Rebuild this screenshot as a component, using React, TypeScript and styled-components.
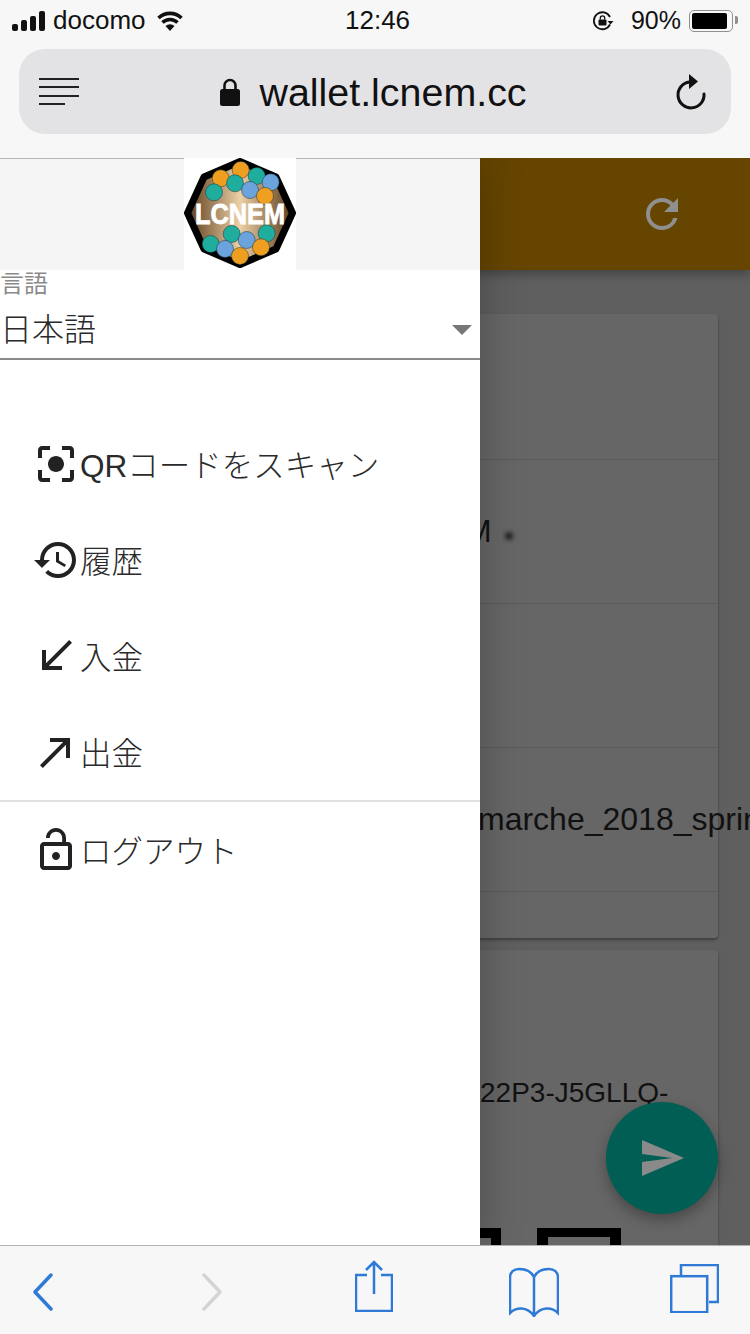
import styled, { createGlobalStyle } from 'styled-components'
import { MdCallMade, MdCallReceived, MdCenterFocusStrong, MdHistory, MdLockOpen, MdRefresh, MdSend } from 'react-icons/md'
import type { ReactNode } from 'react'

const UI_FONT = '"Liberation Sans", "Noto Sans CJK JP", sans-serif'
const BLUE = '#2f7ad6'

const UPPER_CELLS = [
	[36.7, 20.3, '#ef9f1f'],
	[56.7, 12, '#ef9f1f'],
	[72.7, 18, '#1fae9e'],
	[86.7, 24.3, '#6ba3dc'],
	[51, 25.3, '#1fae9e'],
	[30, 34.3, '#1fae9e'],
	[66, 32, '#6ba3dc'],
	[81, 38, '#ef9f1f'],
] as const

const LOWER_CELLS = [
	[47.7, 76, '#1fae9e'],
	[82.7, 75.3, '#1fae9e'],
	[62.7, 82, '#6ba3dc'],
	[26.7, 86, '#1fae9e'],
	[41, 91, '#6ba3dc'],
	[77, 89.3, '#ef9f1f'],
	[56, 98, '#ef9f1f'],
] as const

const MENU: { icon: ReactNode; label: string }[] = [
	{ icon: <MdCenterFocusStrong size={48} />, label: 'QRコードをスキャン' },
	{ icon: <MdHistory size={48} />, label: '履歴' },
	{ icon: <MdCallReceived size={48} />, label: '入金' },
	{ icon: <MdCallMade size={48} />, label: '出金' },
]

function Logo() {
	return (
		<svg width="112" height="112" viewBox="0 0 112 112">
			<defs>
				<linearGradient id="coin" x1="0" x2="1" y1="0" y2="0">
					<stop offset="0" stopColor="#5c3d1c" />
					<stop offset="0.5" stopColor="#ecd0a6" />
					<stop offset="1" stopColor="#5c3d1c" />
				</linearGradient>
			</defs>
			<rect width="112" height="112" fill="#fff" />
			<polygon
				points="56,3.500 92,19 108.500,55 92,91 56,106.500 20,91 3.500,55 20,19"
				fill="url(#coin)"
				stroke="#000"
				strokeWidth="7"
				strokeLinejoin="round"
			/>
			{[...UPPER_CELLS, ...LOWER_CELLS].map(([cx, cy, fill]) => (
				<circle key={`${cx}-${cy}`} cx={cx} cy={cy} r="8.500" fill={fill} stroke="#17323a" strokeWidth="0.5" />
			))}
			<text
				x="11"
				y="66"
				fill="#fff"
				stroke="#fff"
				strokeWidth="0.8"
				fontFamily="Liberation Sans"
				fontWeight="700"
				fontSize="29"
				textLength="90"
				lengthAdjust="spacingAndGlyphs"
			>
				LCNEM
			</text>
		</svg>
	)
}

export default function App() {
	return (
		<Phone>
			<GlobalStyle />
			<TopChrome>
				<StatusBar>
					<StatusSide>
						<svg width="33" height="20" viewBox="0 0 33 20">
							<rect x="0" y="13" width="6" height="7" rx="2" fill="#111" />
							<rect x="9" y="9" width="6" height="11" rx="2" fill="#111" />
							<rect x="18" y="5" width="6" height="15" rx="2" fill="#111" />
							<rect x="27" y="0" width="6" height="20" rx="2" fill="#111" />
						</svg>
						<Carrier>docomo</Carrier>
						<svg width="28" height="20" viewBox="0 0 28 20">
							<path d="M14 20 9.500 15a6.500 6.500 0 0 1 9 0Z" fill="#111" />
							<path d="M6.500 11.500a10.800 10.800 0 0 1 15 0M2.500 7a16.500 16.500 0 0 1 23 0" fill="none" stroke="#111" strokeWidth="3.600" />
						</svg>
					</StatusSide>
					<Clock>12:46</Clock>
					<StatusRight>
						<svg width="22" height="22" viewBox="0 0 22 22">
							<path d="M18 14.500A8.500 8.500 0 1 1 18 7" fill="none" stroke="#111" strokeWidth="1.800" />
							<path d="m15.500 11 6 0-3 3.500Z" fill="#111" />
							<rect x="6.500" y="9.500" width="8" height="6" rx="1" fill="#111" />
							<path d="M8.300 9.500V8a2.200 2.200 0 0 1 4.400 0v1.500" fill="none" stroke="#111" strokeWidth="1.300" />
						</svg>
						<Percent>90%</Percent>
						<Battery>
							<BatteryFill />
						</Battery>
					</StatusRight>
				</StatusBar>
				<UrlBar>
					<ReaderLines>
						<ReaderLine />
						<ReaderLine />
						<ReaderLine />
						<ReaderLine $short />
					</ReaderLines>
					<Address>
						<svg width="20" height="28" viewBox="0 0 20 28">
							<path d="M4.500 13V7.500a5.500 5.500 0 0 1 11 0V13" fill="none" stroke="#111" strokeWidth="2.600" />
							<rect x="0" y="11" width="20" height="17" rx="2.500" fill="#111" />
						</svg>
						<Domain>wallet.lcnem.cc</Domain>
					</Address>
					<svg width="32" height="36" viewBox="0 0 32 36">
						<path d="M13.500 8A13 13 0 1 0 28 20" fill="none" stroke="#111" strokeWidth="3" strokeLinecap="round" />
						<path d="M13 0l9 7.500-9 7.500Z" fill="#111" />
					</svg>
				</UrlBar>
			</TopChrome>

			<Screen>
				<Page>
					<AppBar>
						<MdRefresh size={48} />
					</AppBar>
					<Content>
						<Card>
							<CardRow />
							<CardRow $offset={433}>
								<CardText>M</CardText>
								<Smudge />
							</CardRow>
							<CardRow />
							<CardRow $offset={446}>
								<CardText>marche_2018_spring</CardText>
							</CardRow>
							<CardFooter />
						</Card>
						<QrCard>
							<AddressLine>22P3-J5GLLQ-</AddressLine>
							<svg width="686" height="17" viewBox="0 0 686 17">
								<path d="M448 0h21v17h-10V10h-11Z" fill="#000" />
								<path d="M505 0h84v17h-11V9h-62v8h-11Z" fill="#000" />
							</svg>
						</QrCard>
					</Content>
					<Fab>
						<MdSend size={48} />
					</Fab>
				</Page>

				<Drawer>
					<DrawerHeader>
						<Logo />
					</DrawerHeader>
					<LanguageField>
						<FieldLabel>言語</FieldLabel>
						<FieldValue>
							日本語
							<Caret />
						</FieldValue>
					</LanguageField>
					<Menu>
						{MENU.map((item) => (
							<MenuItem key={item.label}>
								{item.icon}
								<MenuLabel>{item.label}</MenuLabel>
							</MenuItem>
						))}
						<Divider />
						<MenuItem>
							<MdLockOpen size={48} />
							<MenuLabel>ログアウト</MenuLabel>
						</MenuItem>
					</Menu>
				</Drawer>
			</Screen>

			<BottomBar>
				<NavSlot $left={32} $top={27}>
					<svg width="22" height="38" viewBox="0 0 22 38">
						<path d="M19 2 3 19l16 17" fill="none" stroke={BLUE} strokeWidth="3.500" strokeLinecap="round" strokeLinejoin="round" />
					</svg>
				</NavSlot>
				<NavSlot $left={147} $top={27}>
					<svg width="22" height="38" viewBox="0 0 22 38">
						<path d="m3 2 16 17L3 36" fill="none" stroke="#d4d4d4" strokeWidth="3.500" strokeLinecap="round" strokeLinejoin="round" />
					</svg>
				</NavSlot>
				<NavSlot $left={132} $top={14}>
					<svg width="38" height="52" viewBox="0 0 38 52">
						<path d="M12 15H1v36h36V15H26" fill="none" stroke={BLUE} strokeWidth="2.500" />
						<path d="M19 34V2M11 10l8-8 8 8" fill="none" stroke={BLUE} strokeWidth="2.500" />
					</svg>
				</NavSlot>
				<NavSlot $left={116} $top={21}>
					<svg width="50" height="50" viewBox="0 0 50 50">
						<path
							d="M25 10C22 4 16 2 10 2 5 2 1 5 1 11v35c6-6 17-7 24 3 7-10 18-9 24-3V11c0-6-4-9-9-9-6 0-12 2-15 8Zm0 0v39"
							fill="none"
							stroke={BLUE}
							strokeWidth="2.500"
						/>
					</svg>
				</NavSlot>
				<NavSlot $left={111} $top={18}>
					<svg width="49" height="49" viewBox="0 0 49 49">
						<path d="M11 11V1h37v37h-9" fill="none" stroke={BLUE} strokeWidth="2.500" />
						<rect x="1.200" y="12.200" width="36" height="36" fill="none" stroke={BLUE} strokeWidth="2.500" />
					</svg>
				</NavSlot>
			</BottomBar>
		</Phone>
	)
}

const GlobalStyle = createGlobalStyle`
	html, body {
		margin: 0;
		padding: 0;
		background: #fff;
	}
	body {
		font-family: ${UI_FONT};
	}
`

const Phone = styled.div`
	display: flex;
	flex-direction: column;
	width: 750px;
	height: 1334px;
	overflow: hidden;
`

const TopChrome = styled.header`
	display: flex;
	flex-direction: column;
	height: 158px;
	flex-shrink: 0;
	padding: 0 19px;
	box-sizing: border-box;
	background: #f7f7f7;
	color: #111;
`

const StatusBar = styled.div`
	display: grid;
	grid-template-columns: 333px auto 1fr;
	align-items: center;
	height: 41px;
	margin: 0 -4px 8px -7px;
`

const StatusSide = styled.div`
	display: flex;
	align-items: center;
`

const StatusRight = styled(StatusSide)`
	justify-content: flex-end;
`

const Carrier = styled.span`
	font-size: 26px;
	margin: 0 10px 0 8px;
`

const Clock = styled.span`
	font-size: 26px;
	font-weight: 500;
`

const Percent = styled.span`
	font-size: 25px;
	margin: 0 8px 0 17px;
`

const Battery = styled.div`
	position: relative;
	width: 38px;
	height: 16px;
	padding: 2px;
	border: 1.500px solid #8f8f8f;
	border-radius: 5px;
	box-sizing: content-box;
	margin-right: 2px;
	&::after {
		content: '';
		position: absolute;
		right: -6px;
		top: 5px;
		width: 3px;
		height: 8px;
		background: #8f8f8f;
		border-radius: 0 2px 2px 0;
	}
`

const BatteryFill = styled.div`
	width: 92%;
	height: 100%;
	background: #000;
	border-radius: 2px;
`

const UrlBar = styled.div`
	display: flex;
	align-items: center;
	justify-content: space-between;
	height: 85px;
	padding: 0 23px 0 20px;
	background: #e3e3e5;
	border-radius: 26px;
`

const ReaderLines = styled.div`
	display: flex;
	flex-direction: column;
	gap: 6.500px;
	width: 40px;
`

const ReaderLine = styled.div<{ $short?: boolean }>`
	height: 2px;
	width: ${({ $short }) => ($short ? '26px' : '40px')};
	background: #222;
`

const Address = styled.div`
	display: flex;
	align-items: center;
	gap: 19px;
	margin-right: 8px;
`

const Domain = styled.span`
	font-size: 39.400px;
	line-height: 44px;
`

const Screen = styled.main`
	position: relative;
	flex: 1;
	min-height: 0;
	overflow: hidden;
`

const Page = styled.div`
	position: relative;
	height: 100%;
	background: #5f5f5f;
`

const AppBar = styled.div`
	display: flex;
	align-items: center;
	justify-content: flex-end;
	height: 112px;
	padding-right: 64px;
	background: #664500;
	color: #8f8f8f;
	box-shadow: 0 4px 10px rgba(0, 0, 0, 0.3);
`

const Content = styled.div`
	display: flex;
	flex-direction: column;
	gap: 12px;
	margin: 44px 32px 0;
`

const Card = styled.section`
	background: #666;
	border-radius: 4px;
	box-shadow: 0 2px 3px rgba(0, 0, 0, 0.35);
`

const CardRow = styled.div<{ $offset?: number }>`
	display: flex;
	align-items: center;
	gap: 13px;
	height: 143px;
	padding-left: ${({ $offset }) => $offset ?? 0}px;
	border-bottom: 1px solid #5a5a5a;
	white-space: nowrap;
	&:first-child {
		height: 145px;
	}
`

const CardText = styled.span`
	font-size: 32px;
	color: #111;
`

const Smudge = styled.span`
	width: 8px;
	height: 8px;
	margin-top: 8px;
	border-radius: 50%;
	background: #222;
	filter: blur(2px);
`

const CardFooter = styled.div`
	height: 46px;
`

const QrCard = styled(Card)`
	height: 300px;
	padding-top: 125px;
	box-sizing: border-box;
	& > svg {
		display: block;
		margin-top: 117px;
	}
`

const AddressLine = styled.div`
	height: 36px;
	padding-left: 448px;
	font-size: 28px;
	line-height: 36px;
	color: #111;
	white-space: nowrap;
`

const Fab = styled.div`
	position: absolute;
	right: 32px;
	top: 944px;
	display: flex;
	align-items: center;
	justify-content: center;
	width: 112px;
	height: 112px;
	border-radius: 50%;
	background: #005e55;
	color: #8a8a8a;
	box-shadow: 0 6px 14px rgba(0, 0, 0, 0.3);
`

const Drawer = styled.aside`
	position: absolute;
	top: 0;
	bottom: 0;
	left: 0;
	display: flex;
	flex-direction: column;
	width: 480px;
	background: #fff;
	box-shadow: 0 0 40px rgba(0, 0, 0, 0.25);
`

const DrawerHeader = styled.div`
	display: flex;
	justify-content: center;
	height: 112px;
	background: #f5f5f5;
	box-shadow: inset 0 1px 0 #b5b5b5;
`

const LanguageField = styled.div`
	display: flex;
	flex-direction: column;
	height: 90px;
	box-sizing: border-box;
	border-bottom: 2px solid #8a8a8a;
`

const FieldLabel = styled.label`
	font-size: 24px;
	line-height: 28px;
	color: #8a8a8a;
`

const FieldValue = styled.div`
	display: flex;
	align-items: center;
	justify-content: space-between;
	margin-top: 10px;
	padding-right: 8px;
	font-size: 32px;
	font-weight: 300;
	line-height: 44px;
	color: #2a2a2a;
`

const Caret = styled.span`
	width: 0;
	height: 0;
	border-left: 10px solid transparent;
	border-right: 10px solid transparent;
	border-top: 10px solid #777;
`

const Menu = styled.nav`
	display: flex;
	flex-direction: column;
	padding-top: 56px;
`

const MenuItem = styled.div`
	display: flex;
	align-items: center;
	height: 96px;
	padding-left: 32px;
	color: #222;
	white-space: nowrap;
`

const MenuLabel = styled.span`
	font-size: 31.500px;
	font-weight: 300;
	color: #2a2a2a;
	padding-bottom: 3px;
`

const Divider = styled.hr`
	width: 100%;
	height: 2px;
	margin: 0;
	border: 0;
	background: #e0e0e0;
`

const BottomBar = styled.footer`
	display: flex;
	align-items: flex-start;
	height: 89px;
	flex-shrink: 0;
	box-sizing: border-box;
	background: #f7f7f7;
	border-top: 1px solid #b2b2b2;
`

const NavSlot = styled.div<{ $left: number; $top: number }>`
	display: flex;
	margin: ${({ $top, $left }) => `${$top}px 0 0 ${$left}px`};
`
